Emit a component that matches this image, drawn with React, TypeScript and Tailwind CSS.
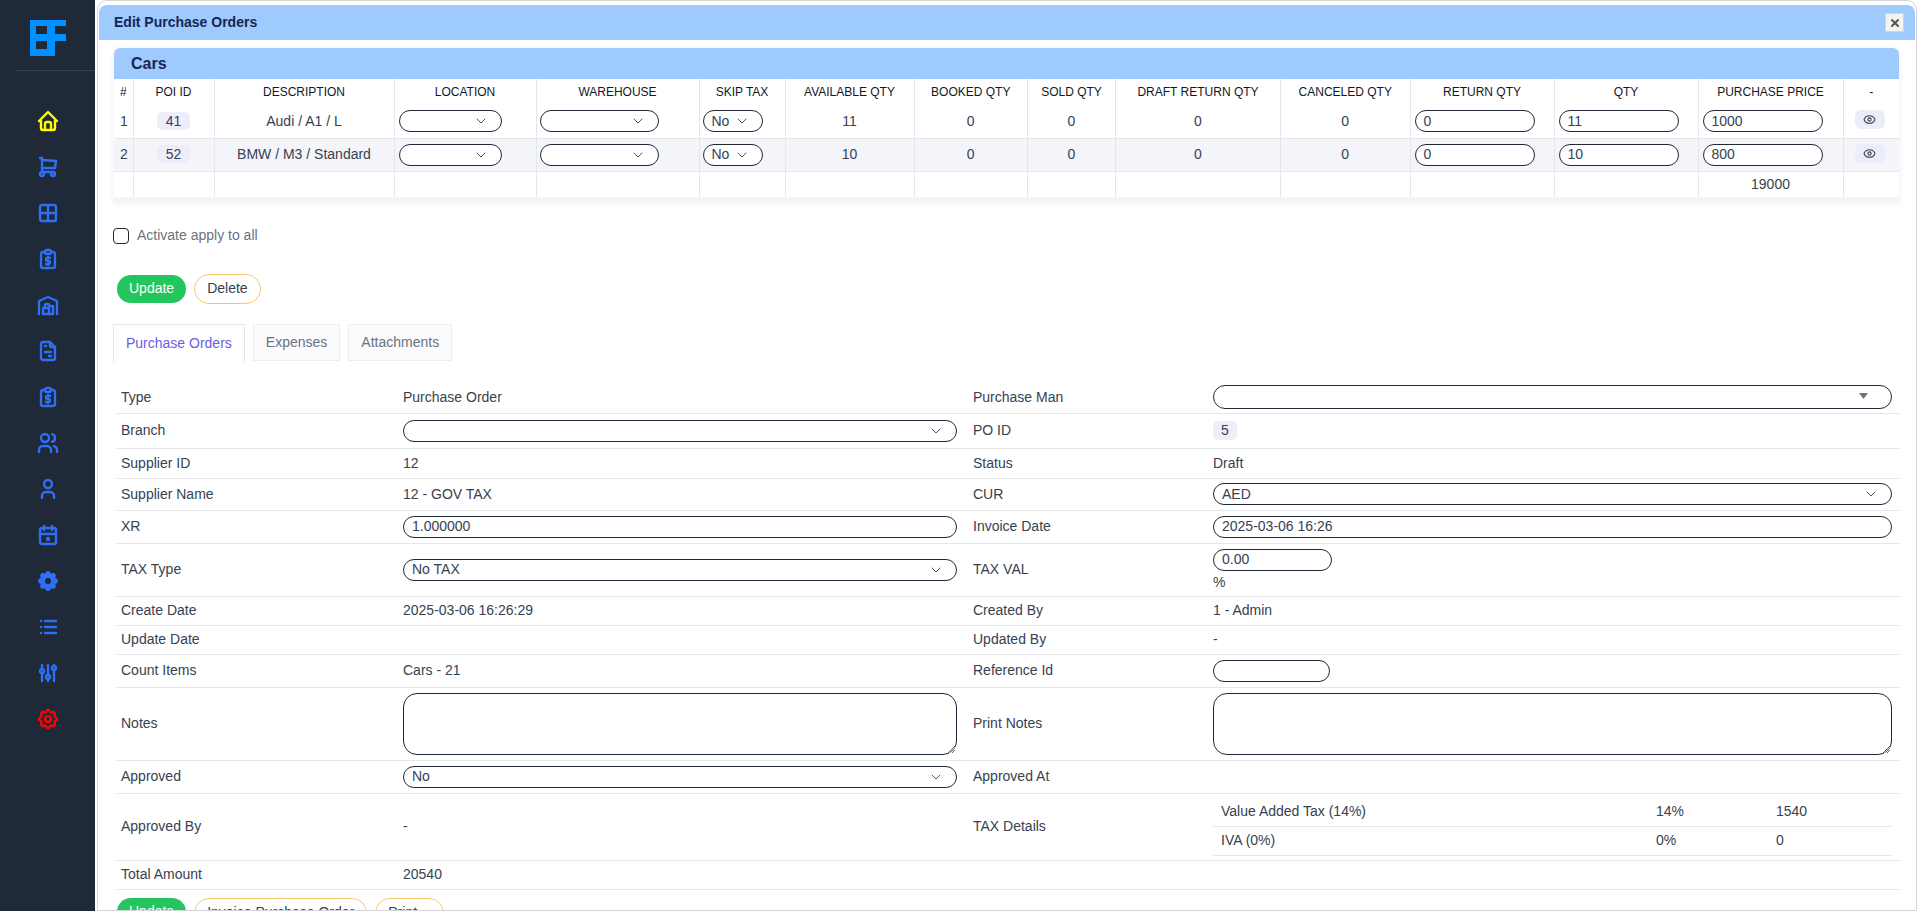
import React from 'react';
import { ChevronDown, Eye, X } from 'lucide-react';
import {
  TbHome,
  TbShoppingCart,
  TbBorderAll,
  TbReportMoney,
  TbBuildingWarehouse,
  TbFileInvoice,
  TbUsers,
  TbUser,
  TbCalendarDue,
  TbSettingsFilled,
  TbList,
  TbAdjustments,
  TbSettings,
} from 'react-icons/tb';

const sideIcons = [
  { Icon: TbHome, color: 'text-[#ffff00]', sw: 2.4 },
  { Icon: TbShoppingCart, color: 'text-[#2f6ff5]', sw: 2.4 },
  { Icon: TbBorderAll, color: 'text-[#2f6ff5]', sw: 2.4 },
  { Icon: TbReportMoney, color: 'text-[#2f6ff5]', sw: 2.4 },
  { Icon: TbBuildingWarehouse, color: 'text-[#2f6ff5]', sw: 2.4 },
  { Icon: TbFileInvoice, color: 'text-[#2f6ff5]', sw: 2.4 },
  { Icon: TbReportMoney, color: 'text-[#2f6ff5]', sw: 2.4 },
  { Icon: TbUsers, color: 'text-[#2f6ff5]', sw: 2.4 },
  { Icon: TbUser, color: 'text-[#2f6ff5]', sw: 2.4 },
  { Icon: TbCalendarDue, color: 'text-[#2f6ff5]', sw: 2.4 },
  { Icon: TbSettingsFilled, color: 'text-[#2f6ff5]', sw: 0 },
  { Icon: TbList, color: 'text-[#2f6ff5]', sw: 2.4 },
  { Icon: TbAdjustments, color: 'text-[#2f6ff5]', sw: 2.4 },
  { Icon: TbSettings, color: 'text-[#ff0000]', sw: 2.4 },
];

const Logo = () => (
  <svg width="36" height="36" viewBox="0 0 36 36">
    <path
      fill="#0090ff"
      fillRule="evenodd"
      d="M0 0H36V6H25V14H36V21H25V36H0ZM6 6V14H17V6ZM6 21V29H17V21Z"
    />
  </svg>
);

const Pill = ({ children, className = '' }: { children?: React.ReactNode; className?: string }) => (
  <div
    className={`flex h-[22px] items-center rounded-full border border-[#1f2937] bg-white pl-[8px] text-[14px] text-[#374151] ${className}`}
  >
    {children}
  </div>
);

const SelectBox = ({ value, className = '' }: { value?: string; className?: string }) => (
  <Pill className={`justify-between pr-[12px] ${className}`}>
    <span>{value}</span>
    <ChevronDown className="h-[16px] w-[16px] text-[#4b5563]" strokeWidth={1.5} />
  </Pill>
);

const Badge = ({ children }: { children: React.ReactNode }) => (
  <span className="inline-block rounded-[5px] bg-[#eeeefb] px-[9px] text-[14px] leading-[18px] text-[#374151]">
    {children}
  </span>
);

const headers = [
  '#', 'POI ID', 'DESCRIPTION', 'LOCATION', 'WAREHOUSE', 'SKIP TAX', 'AVAILABLE QTY', 'BOOKED QTY',
  'SOLD QTY', 'DRAFT RETURN QTY', 'CANCELED QTY', 'RETURN QTY', 'QTY', 'PURCHASE PRICE', '-',
];

const items = [
  { n: 1, id: '41', name: 'Audi / A1 / L', avail: '11', qty: '11', price: '1000' },
  { n: 2, id: '52', name: 'BMW / M3 / Standard', avail: '10', qty: '10', price: '800' },
];

const Td = ({ children, className = '' }: { children?: React.ReactNode; className?: string }) => (
  <td className={`border-l border-[#e5e7eb] text-center first:border-l-0 ${className}`}>{children}</td>
);

const ItemsTable = () => (
  <div className="ml-[15px] mr-[16px] mt-[8px] rounded-t-[6px] shadow-[0_1px_6px_rgba(0,0,0,0.08)]">
    <div className="flex h-[31px] items-center rounded-t-[6px] bg-[#9fcafe] pl-[17px] text-[16px] font-bold text-[#172554]">
      Cars
    </div>
    <table className="w-[1785px] table-fixed border-b-[5px] border-[#f3f4f6] text-[14px] text-[#374151]">
      <colgroup>
        <col className="w-[19px]" />
        <col className="w-[81px]" />
        <col className="w-[180px]" />
        <col className="w-[142px]" />
        <col className="w-[163px]" />
        <col className="w-[86px]" />
        <col className="w-[129px]" />
        <col className="w-[113.5px]" />
        <col className="w-[88px]" />
        <col className="w-[165px]" />
        <col className="w-[129.5px]" />
        <col className="w-[144px]" />
        <col className="w-[144px]" />
        <col className="w-[145px]" />
        <col className="w-[56px]" />
      </colgroup>
      <thead>
        <tr className="h-[26px]">
          {headers.map((h) => (
            <th
              key={h}
              className="whitespace-nowrap border-l border-[#e5e7eb] text-center text-[12px] font-medium text-[#111827] first:border-l-0"
            >
              {h}
            </th>
          ))}
        </tr>
      </thead>
      <tbody>
        {items.map((r) => (
          <tr key={r.n} className={`h-[33px] border-b border-[#e5e7eb] ${r.n === 2 ? 'bg-[#f4f5fa]' : ''}`}>
            <td className="pl-[6px] text-left">{r.n}</td>
            <Td>
              <Badge>{r.id}</Badge>
            </Td>
            <Td>{r.name}</Td>
            <Td className="pl-[4px]">
              <SelectBox className="w-[103px]" />
            </Td>
            <Td className="pl-[3px]">
              <SelectBox className="w-[119px]" />
            </Td>
            <Td className="pl-[3px]">
              <SelectBox value="No" className="w-[60px]" />
            </Td>
            <Td>{r.avail}</Td>
            <Td>0</Td>
            <Td>0</Td>
            <Td>0</Td>
            <Td>0</Td>
            <Td className="pl-[4px]">
              <Pill className="w-[120px]">0</Pill>
            </Td>
            <Td className="pl-[4px]">
              <Pill className="w-[120px]">{r.qty}</Pill>
            </Td>
            <Td className="pl-[4px]">
              <Pill className="w-[120px]">{r.price}</Pill>
            </Td>
            <Td className="pr-[3px]">
              <span className="inline-flex h-[19px] w-[30px] items-center justify-center rounded-[6px] bg-[#ecedf9]">
                <Eye className="h-[13px] w-[13px] text-[#374151]" />
              </span>
            </Td>
          </tr>
        ))}
        <tr className="h-[28px]">
          <td />
          <Td />
          <Td />
          <Td />
          <Td />
          <Td />
          <Td />
          <Td />
          <Td />
          <Td />
          <Td />
          <Td />
          <Td />
          <Td>19000</Td>
          <Td />
        </tr>
      </tbody>
    </table>
  </div>
);

const rowClass = 'grid grid-cols-[279px_570px_240px_695px] items-center border-b border-[#e5e7eb]';

const Label = ({ children }: { children: React.ReactNode }) => <div className="pl-[5px]">{children}</div>;
const Label2 = ({ children }: { children: React.ReactNode }) => <div className="pl-[8px]">{children}</div>;
const Val = ({ children }: { children?: React.ReactNode }) => <div className="px-[8px]">{children}</div>;

const Row = ({
  h,
  a,
  b,
  c,
  d,
}: {
  h: string;
  a: string;
  b?: React.ReactNode;
  c: string;
  d?: React.ReactNode;
}) => (
  <div className={`${rowClass} ${h}`}>
    <Label>{a}</Label>
    <Val>{b}</Val>
    <Label2>{c}</Label2>
    <Val>{d}</Val>
  </div>
);

const OutlineBtn = ({ children }: { children: React.ReactNode }) => (
  <button className="flex h-[30px] items-center rounded-full border border-[#fbc56d] bg-white px-[12px] text-[14px] text-[#374151]">
    {children}
  </button>
);

const NotesBox = () => (
  <textarea className="block h-[62px] w-full rounded-[14px] border border-[#1f2937] bg-white" />
);

const tabIdle =
  'flex h-[37px] items-center border border-[#eceef3] bg-[#fbfbfd] px-[12px] text-[#6b7280]';

const App = () => {
  return (
    <div className="flex h-[911px] overflow-hidden bg-white font-['Liberation_Sans',Arial,sans-serif] text-[14px] text-[#374151]">
      <aside className="w-[95px] shrink-0 bg-[#1f2937]">
        <div className="ml-[16px] flex h-[71px] border-b border-[#374151] pl-[14px] pt-[20px]">
          <Logo />
        </div>
        <nav className="mt-[38px] flex flex-col items-center gap-[22px]">
          {sideIcons.map(({ Icon, color, sw }, i) => (
            <Icon key={i} className={`h-[24px] w-[24px] ${color}`} strokeWidth={sw} />
          ))}
        </nav>
      </aside>

      <main className="ml-[2px] h-[911px] w-[1820px] overflow-hidden rounded-t-[10px] border border-[#d1d5db] px-px pt-[4px]">
        <div className="flex h-[35px] items-center justify-between rounded-t-[8px] bg-[#9fcafe] pl-[15px] pr-[11px] text-[14px] font-bold text-[#172554]">
          <span>Edit Purchase Orders</span>
          <button className="flex h-[19px] w-[19px] items-center justify-center border border-[#d1d5db] bg-[#f3f3f0]">
            <X className="h-[12px] w-[12px] text-[#555555]" strokeWidth={4} />
          </button>
        </div>

        <ItemsTable />

        <label className="ml-[14px] mt-[26px] flex h-[16px] items-center gap-[8px] text-[14px] text-[#6b7280]">
          <span className="h-[16px] w-[16px] rounded-[4px] border border-[#1f2937] bg-white" />
          Activate apply to all
        </label>

        <div className="ml-[18px] mt-[30px] flex items-center gap-[8px]">
          <button className="flex h-[28px] items-center rounded-full bg-[#22c55e] px-[12px] text-[14px] text-white">
            Update
          </button>
          <OutlineBtn>Delete</OutlineBtn>
        </div>

        <div className="ml-[14px] mt-[20px] flex gap-[8px]">
          <div className="flex h-[38px] items-center border-x border-t border-[#e5e7eb] bg-white px-[12px] text-[#6d5ce7]">
            Purchase Orders
          </div>
          <div className={tabIdle}>Expenses</div>
          <div className={tabIdle}>Attachments</div>
        </div>

        <div className="ml-[17px] mt-[20px] w-[1784px]">
          <Row
            h="h-[32px]"
            a="Type"
            b="Purchase Order"
            c="Purchase Man"
            d={
              <Pill className="h-[24px] w-full justify-end pr-[23px]">
                <svg width="9" height="6" viewBox="0 0 9 6" className="-mt-[2px]">
                  <polygon points="0,0 9,0 4.5,6" fill="#6b7280" />
                </svg>
              </Pill>
            }
          />
          <Row
            h="h-[35px]"
            a="Branch"
            b={<SelectBox className="w-full" />}
            c="PO ID"
            d={<span className="inline-block rounded-[5px] bg-[#eeeefb] px-[8px] leading-[19px]">5</span>}
          />
          <Row h="h-[30px]" a="Supplier ID" b="12" c="Status" d="Draft" />
          <Row h="h-[32px]" a="Supplier Name" b="12 - GOV TAX" c="CUR" d={<SelectBox value="AED" className="w-full" />} />
          <Row h="h-[33px]" a="XR" b={<Pill>1.000000</Pill>} c="Invoice Date" d={<Pill>2025-03-06 16:26</Pill>} />
          <Row
            h="h-[53px]"
            a="TAX Type"
            b={<SelectBox value="No TAX" className="w-full" />}
            c="TAX VAL"
            d={
              <div>
                <Pill className="w-[119px]">0.00</Pill>
                <div className="mt-[2px] leading-[18px]">%</div>
              </div>
            }
          />
          <Row h="h-[29px]" a="Create Date" b="2025-03-06 16:26:29" c="Created By" d="1 - Admin" />
          <Row h="h-[29px]" a="Update Date" c="Updated By" d="-" />
          <Row h="h-[33px]" a="Count Items" b="Cars - 21" c="Reference Id" d={<Pill className="w-[117px]" />} />
          <Row h="h-[73px]" a="Notes" b={<NotesBox />} c="Print Notes" d={<NotesBox />} />
          <Row h="h-[33px]" a="Approved" b={<SelectBox value="No" className="w-full" />} c="Approved At" />
          <Row
            h="h-[67px]"
            a="Approved By"
            b="-"
            c="TAX Details"
            d={
              <div className="text-[14px]">
                <div className="grid h-[29px] grid-cols-[435px_120px_1fr] items-center border-b border-[#e5e7eb] pl-[8px]">
                  <span>Value Added Tax (14%)</span>
                  <span>14%</span>
                  <span>1540</span>
                </div>
                <div className="grid h-[29px] grid-cols-[435px_120px_1fr] items-center border-b border-[#e5e7eb] pl-[8px]">
                  <span>IVA (0%)</span>
                  <span>0%</span>
                  <span>0</span>
                </div>
              </div>
            }
          />
          <Row h="h-[29px]" a="Total Amount" b="20540" c="" />
        </div>

        <div className="ml-[18px] mt-[8px] flex items-start gap-[8px]">
          <button className="flex h-[28px] items-center rounded-full bg-[#22c55e] px-[12px] text-[14px] text-white">
            Update
          </button>
          <OutlineBtn>Invoice Purchase Order</OutlineBtn>
          <OutlineBtn>
            Print
            <ChevronDown className="-mr-[2px] ml-[4px] h-[12px] w-[12px]" />
          </OutlineBtn>
        </div>
      </main>
    </div>
  );
};

export default App;
